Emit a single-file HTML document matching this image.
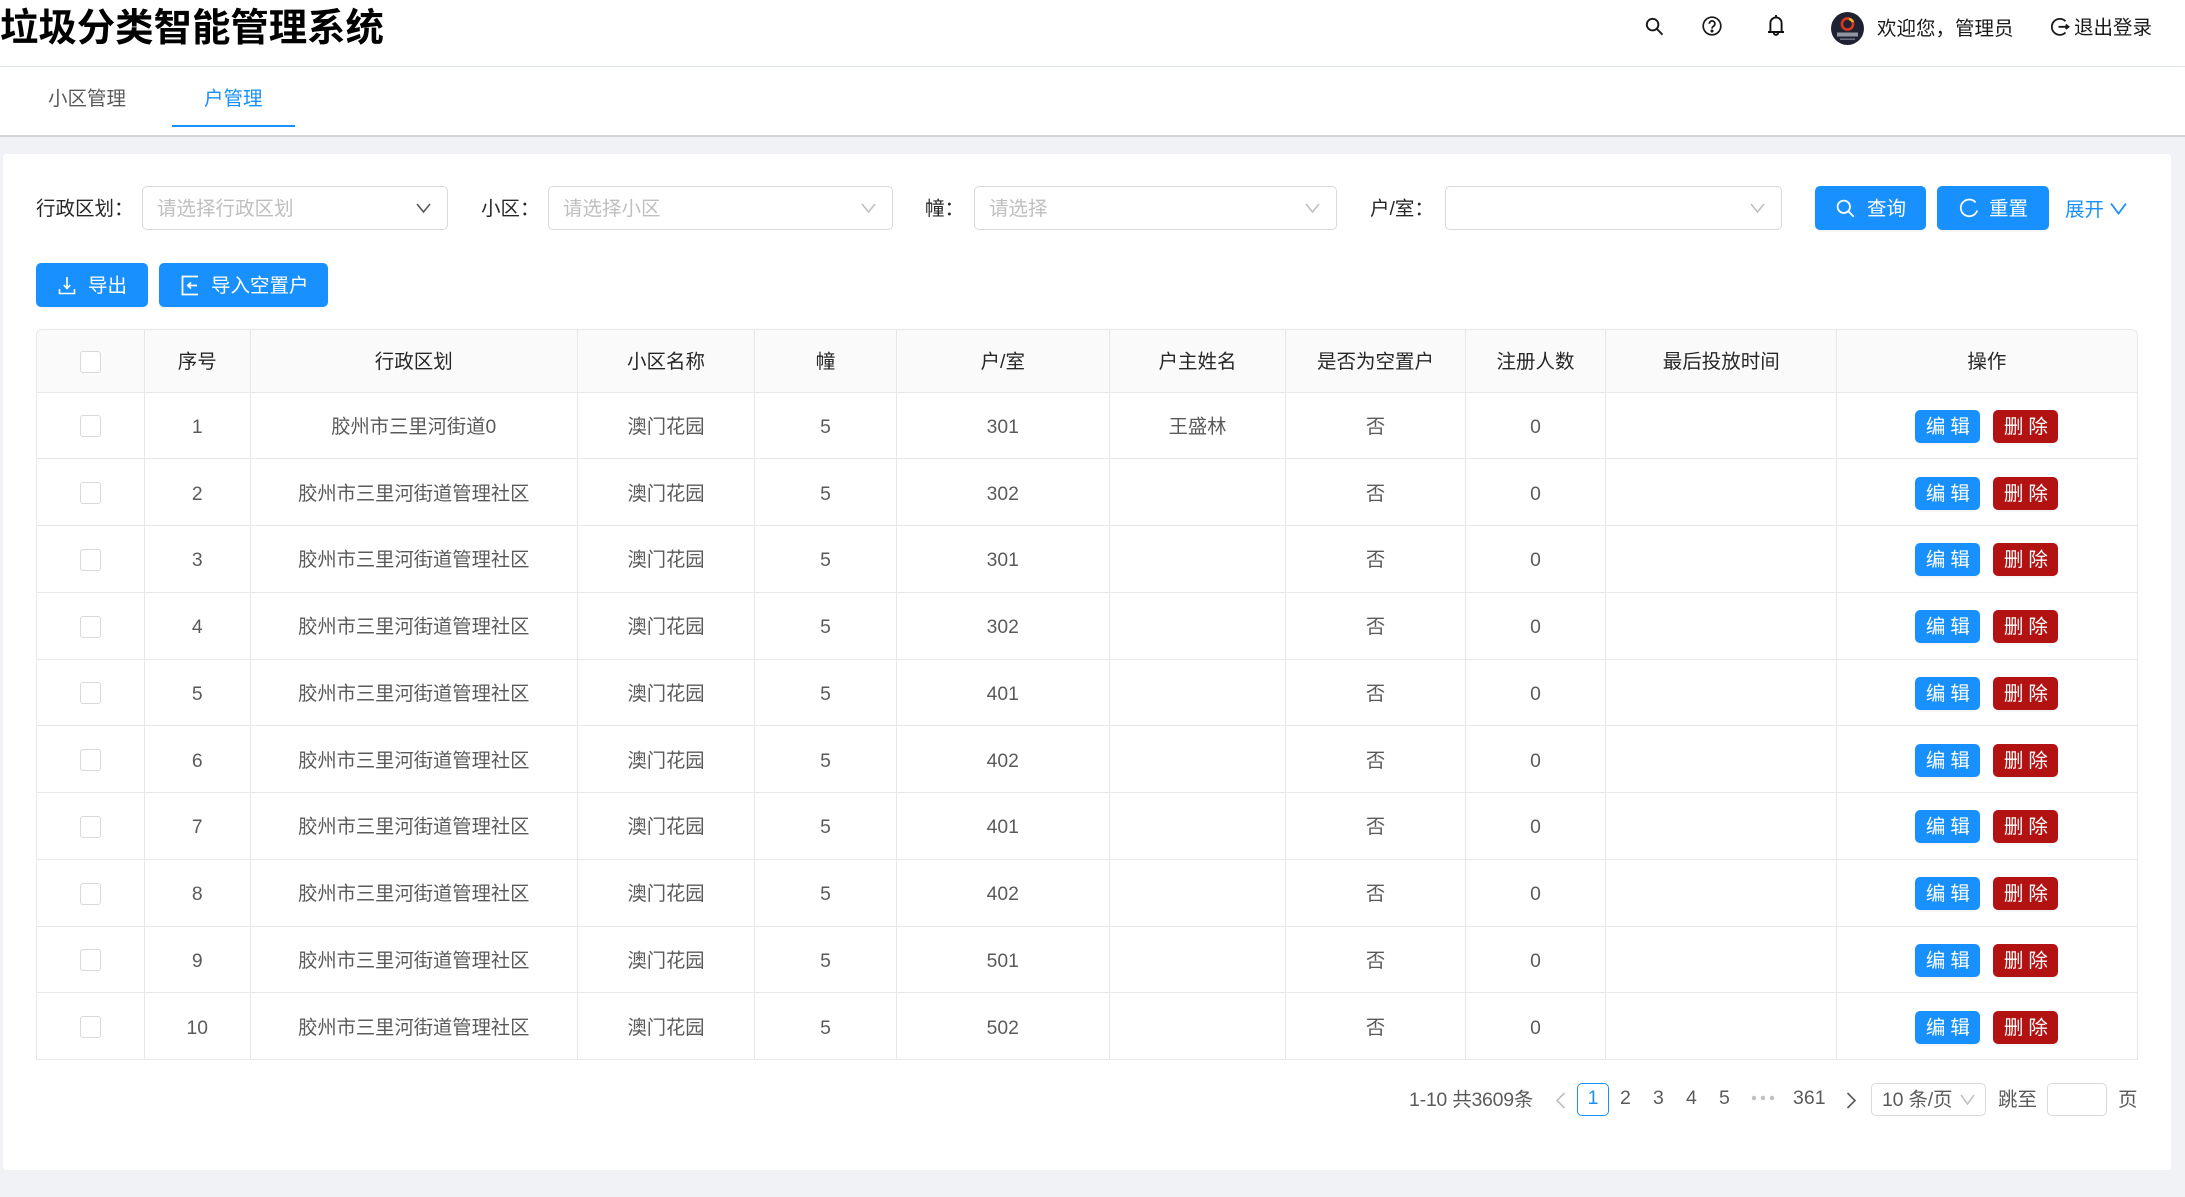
<!DOCTYPE html>
<html lang="zh-CN">
<head>
<meta charset="utf-8">
<title>垃圾分类智能管理系统</title>
<style>
*{box-sizing:border-box;margin:0;padding:0}
html,body{width:2185px;height:1197px;overflow:hidden;background:#f0f2f5;font-family:"Liberation Sans","Noto Sans CJK SC",sans-serif;font-size:19.5px;color:rgba(0,0,0,.65)}
.a{position:absolute;white-space:nowrap;line-height:28px}
#hd{position:absolute;left:0;top:0;width:2185px;height:66px;background:#fff;box-shadow:0 1px 4px rgba(0,21,41,.12)}
#tabs{position:absolute;left:0;top:67px;width:2185px;height:70px;background:#fff;border-bottom:2px solid #d4d4d6}
#card{position:absolute;left:3px;top:154px;width:2168px;height:1016px;background:#fff;border-radius:3px}
.sel{position:absolute;top:186px;height:44px;background:#fff;border:1.5px solid #d9d9d9;border-radius:5px;line-height:44px;padding-left:14px;color:#bfbfbf}
.sel svg{position:absolute;right:16px;top:14px}
.btn{position:absolute;background:#1890ff;color:#fff;border-radius:5px;height:44px;line-height:46px;box-shadow:0 2px 0 rgba(0,0,0,.035)}
.btn span{position:absolute;white-space:nowrap;top:0}
.btn svg{position:absolute}
.lb{color:rgba(0,0,0,.85)}
table{position:absolute;left:36px;top:329px;width:2100.5px;border-collapse:separate;border-spacing:0;table-layout:fixed;border-top:1.5px solid #e8e8e8;border-left:1.5px solid #e8e8e8;border-radius:6px 6px 0 0}
th,td{border-right:1.5px solid #e8e8e8;border-bottom:1.5px solid #e8e8e8;text-align:center;font-weight:400;padding:0;line-height:28px}
th{height:62.5px;background:#fafafa;color:rgba(0,0,0,.85);padding-top:2px}
th:first-child{border-top-left-radius:6px}
th:last-child{border-top-right-radius:6px}
td{height:66.78px;color:rgba(0,0,0,.65);padding-top:5px;font-size:19.3px}
.cb{display:inline-block;width:21px;height:22px;background:#fff;border:1.5px solid #d9d9d9;border-radius:3px;vertical-align:middle;position:relative;top:-1px}
td .cb{top:-1.5px}
.e,.d{display:inline-block;width:65px;height:33px;line-height:35px;color:#fff;border-radius:5px;letter-spacing:5px;padding-left:5px;text-align:center;vertical-align:middle;box-shadow:0 2px 0 rgba(0,0,0,.035);font-size:19.5px;position:relative;top:-1.5px}
.e{background:#1890ff;margin-right:13px}
.d{background:#b31212}
.pg{position:absolute;top:1086px;line-height:28px;white-space:nowrap;color:rgba(0,0,0,.65)}
.ipt{position:absolute;background:#fff;border:1.5px solid #d9d9d9;border-radius:5px;top:1083px;height:33px}
</style>
</head>
<body>
<div id="hd"></div>
<div class="a" style="left:0;top:4px;font-size:38.4px;font-weight:700;line-height:50px;color:#000">垃圾分类智能管理系统</div>

<svg class="a" style="left:1645px;top:17px" width="19" height="19" viewBox="0 0 19 19" fill="none" stroke="#1a1a1a" stroke-width="1.9"><circle cx="7.6" cy="7.6" r="5.8"/><path d="M11.9 11.9l5.6 5.8"/></svg>
<svg class="a" style="left:1702px;top:16px" width="20" height="20" viewBox="0 0 20 20" fill="none" stroke="#1a1a1a" stroke-width="1.7"><circle cx="10" cy="10" r="8.8"/><path d="M7.3 7.8a2.8 2.8 0 1 1 4.3 2.3c-1 .7-1.6 1.2-1.6 2.5"/><circle cx="10" cy="15" r=".7" fill="#1a1a1a"/></svg>
<svg class="a" style="left:1767px;top:14px" width="18" height="22" viewBox="0 0 18 22" fill="none" stroke="#111" stroke-width="1.9"><path d="M1 18h16M3.4 18V9a5.6 5.6 0 0 1 11.2 0v9M9 3.4V1M6.8 18.5a2.2 2.4 0 0 0 4.4 0"/></svg>

<svg class="a" style="left:1831px;top:12px" width="33" height="33" viewBox="0 0 33 33"><circle cx="16.5" cy="16.5" r="16.5" fill="#1e2233"/><circle cx="16.5" cy="12" r="5.6" fill="none" stroke="#d8391e" stroke-width="2.6"/><path d="M18 7a5.6 5.6 0 0 1 4 3" stroke="#f5b21d" stroke-width="2.6" fill="none"/><rect x="6" y="20.5" width="21" height="4" fill="#b9bcc6" opacity=".75"/><rect x="9" y="26.5" width="15" height="1.4" fill="#9a9da8" opacity=".7"/></svg>
<div class="a" style="left:1877px;top:15px;color:#1a1a1a">欢迎您，管理员</div>
<svg class="a" style="left:2050px;top:17px" width="20" height="20" viewBox="0 0 20 20" fill="none" stroke="#1a1a1a" stroke-width="1.8"><path d="M15.5 4.2A8 8 0 1 0 15.5 15.5M8.5 9.8h10M15.7 7.6l2.8 2.2-2.8 2.2"/></svg>
<div class="a" style="left:2074px;top:14px;color:#1a1a1a">退出登录</div>

<div id="tabs"></div>
<div class="a" style="left:48px;top:85px;color:rgba(0,0,0,.65)">小区管理</div>
<div class="a" style="left:204px;top:85px;color:#1890ff">户管理</div>
<div class="a" style="left:172px;top:125px;width:123px;height:1.5px;background:#1890ff"></div>

<div id="card"></div>

<div class="a lb" style="left:36px;top:195px">行政区划：</div>
<div class="sel" style="left:142px;width:306px">请选择行政区划<svg width="15" height="14" viewBox="0 0 15 14" fill="none" stroke="#595959" stroke-width="1.6"><path d="M1 3l6.5 8L14 3"/></svg></div>
<div class="a lb" style="left:481px;top:195px">小区：</div>
<div class="sel" style="left:548px;width:345px">请选择小区<svg width="15" height="14" viewBox="0 0 15 14" fill="none" stroke="#bfbfbf" stroke-width="1.6"><path d="M1 3l6.5 8L14 3"/></svg></div>
<div class="a lb" style="left:925px;top:195px">幢：</div>
<div class="sel" style="left:974px;width:363px">请选择<svg width="15" height="14" viewBox="0 0 15 14" fill="none" stroke="#bfbfbf" stroke-width="1.6"><path d="M1 3l6.5 8L14 3"/></svg></div>
<div class="a lb" style="left:1370px;top:195px">户/室：</div>
<div class="sel" style="left:1445px;width:337px"><svg width="15" height="14" viewBox="0 0 15 14" fill="none" stroke="#bfbfbf" stroke-width="1.6"><path d="M1 3l6.5 8L14 3"/></svg></div>

<div class="btn" style="left:1815px;top:186px;width:111px"><svg style="left:21px;top:13px" width="19" height="19" viewBox="0 0 19 19" fill="none" stroke="#fff" stroke-width="1.8"><circle cx="7.8" cy="7.8" r="6.2"/><path d="M12.3 12.3l5.4 5.4"/></svg><span style="left:52px">查询</span></div>
<div class="btn" style="left:1937px;top:186px;width:112px"><svg style="left:22px;top:12px" width="20" height="20" viewBox="0 0 20 20" fill="none" stroke="#fff" stroke-width="1.8"><path d="M16.6 4.4A8.4 8.4 0 1 0 18.2 12.5"/></svg><span style="left:52px">重置</span></div>
<div class="a" style="left:2065px;top:196px;color:#1890ff">展开</div>
<svg class="a" style="left:2110px;top:202px" width="17" height="14" viewBox="0 0 17 14" fill="none" stroke="#1890ff" stroke-width="1.8"><path d="M1 1.5l7.5 10 7.5-10"/></svg>

<div class="btn" style="left:36px;top:263px;width:112px"><svg style="left:22px;top:13px" width="18" height="19" viewBox="0 0 18 19" fill="none" stroke="#fff" stroke-width="1.6"><path d="M9 1v11M5.8 9L9 12.5 12.2 9M1.5 13v4.5h15V13"/></svg><span style="left:52px">导出</span></div>
<div class="btn" style="left:159px;top:263px;width:169px"><svg style="left:22px;top:12px" width="18" height="21" viewBox="0 0 18 21" fill="none" stroke="#fff" stroke-width="1.8"><path d="M17 1.5H1.5v18H17M16 10.5H7M10 7.5l-3.2 3 3.2 3"/></svg><span style="left:52px">导入空置户</span></div>

<table>
<colgroup><col style="width:107.75px"><col style="width:106px"><col style="width:327px"><col style="width:177.5px"><col style="width:141.5px"><col style="width:213px"><col style="width:176.5px"><col style="width:179.5px"><col style="width:140.5px"><col style="width:231px"><col style="width:300.25px"></colgroup>
<tr><th><span class="cb"></span></th><th>序号</th><th>行政区划</th><th>小区名称</th><th>幢</th><th>户/室</th><th>户主姓名</th><th>是否为空置户</th><th>注册人数</th><th>最后投放时间</th><th>操作</th></tr>
<tr><td><span class="cb"></span></td><td>1</td><td>胶州市三里河街道0</td><td>澳门花园</td><td>5</td><td>301</td><td>王盛林</td><td>否</td><td>0</td><td></td><td><span class="e">编辑</span><span class="d">删除</span></td></tr>
<tr><td><span class="cb"></span></td><td>2</td><td>胶州市三里河街道管理社区</td><td>澳门花园</td><td>5</td><td>302</td><td></td><td>否</td><td>0</td><td></td><td><span class="e">编辑</span><span class="d">删除</span></td></tr>
<tr><td><span class="cb"></span></td><td>3</td><td>胶州市三里河街道管理社区</td><td>澳门花园</td><td>5</td><td>301</td><td></td><td>否</td><td>0</td><td></td><td><span class="e">编辑</span><span class="d">删除</span></td></tr>
<tr><td><span class="cb"></span></td><td>4</td><td>胶州市三里河街道管理社区</td><td>澳门花园</td><td>5</td><td>302</td><td></td><td>否</td><td>0</td><td></td><td><span class="e">编辑</span><span class="d">删除</span></td></tr>
<tr><td><span class="cb"></span></td><td>5</td><td>胶州市三里河街道管理社区</td><td>澳门花园</td><td>5</td><td>401</td><td></td><td>否</td><td>0</td><td></td><td><span class="e">编辑</span><span class="d">删除</span></td></tr>
<tr><td><span class="cb"></span></td><td>6</td><td>胶州市三里河街道管理社区</td><td>澳门花园</td><td>5</td><td>402</td><td></td><td>否</td><td>0</td><td></td><td><span class="e">编辑</span><span class="d">删除</span></td></tr>
<tr><td><span class="cb"></span></td><td>7</td><td>胶州市三里河街道管理社区</td><td>澳门花园</td><td>5</td><td>401</td><td></td><td>否</td><td>0</td><td></td><td><span class="e">编辑</span><span class="d">删除</span></td></tr>
<tr><td><span class="cb"></span></td><td>8</td><td>胶州市三里河街道管理社区</td><td>澳门花园</td><td>5</td><td>402</td><td></td><td>否</td><td>0</td><td></td><td><span class="e">编辑</span><span class="d">删除</span></td></tr>
<tr><td><span class="cb"></span></td><td>9</td><td>胶州市三里河街道管理社区</td><td>澳门花园</td><td>5</td><td>501</td><td></td><td>否</td><td>0</td><td></td><td><span class="e">编辑</span><span class="d">删除</span></td></tr>
<tr><td><span class="cb"></span></td><td>10</td><td>胶州市三里河街道管理社区</td><td>澳门花园</td><td>5</td><td>502</td><td></td><td>否</td><td>0</td><td></td><td><span class="e">编辑</span><span class="d">删除</span></td></tr>
</table>

<div class="pg" style="left:1409px;letter-spacing:-.25px">1-10 共3609条</div>
<svg class="a" style="left:1555px;top:1092px" width="11" height="17" viewBox="0 0 11 17" fill="none" stroke="#bfbfbf" stroke-width="1.6"><path d="M9.5 1L2 8.5 9.5 16"/></svg>
<div class="a" style="left:1577px;top:1083px;width:32px;height:33px;border:1.5px solid #1890ff;border-radius:5px;text-align:center;line-height:29px;color:#1890ff">1</div>
<div class="pg" style="left:1620px;top:1084px">2</div>
<div class="pg" style="left:1653px;top:1084px">3</div>
<div class="pg" style="left:1686px;top:1084px">4</div>
<div class="pg" style="left:1719px;top:1084px">5</div>
<svg class="a" style="left:1751px;top:1095px" width="24" height="6" viewBox="0 0 24 6" fill="#bfbfbf"><circle cx="3" cy="3" r="2.2"/><circle cx="12" cy="3" r="2.2"/><circle cx="21" cy="3" r="2.2"/></svg>
<div class="pg" style="left:1793px;top:1084px">361</div>
<svg class="a" style="left:1846px;top:1092px" width="11" height="17" viewBox="0 0 11 17" fill="none" stroke="#595959" stroke-width="1.6"><path d="M1.5 1L9 8.5 1.5 16"/></svg>
<div class="ipt" style="left:1871px;width:115px"></div>
<div class="pg" style="left:1882px;letter-spacing:-.2px">10 条/页</div>
<svg class="a" style="left:1960px;top:1094px" width="15" height="12" viewBox="0 0 15 12" fill="none" stroke="#bfbfbf" stroke-width="1.5"><path d="M1 1l6.5 9L14 1"/></svg>
<div class="pg" style="left:1998px">跳至</div>
<div class="ipt" style="left:2047px;width:60px"></div>
<div class="pg" style="left:2118px">页</div>
</body>
</html>
